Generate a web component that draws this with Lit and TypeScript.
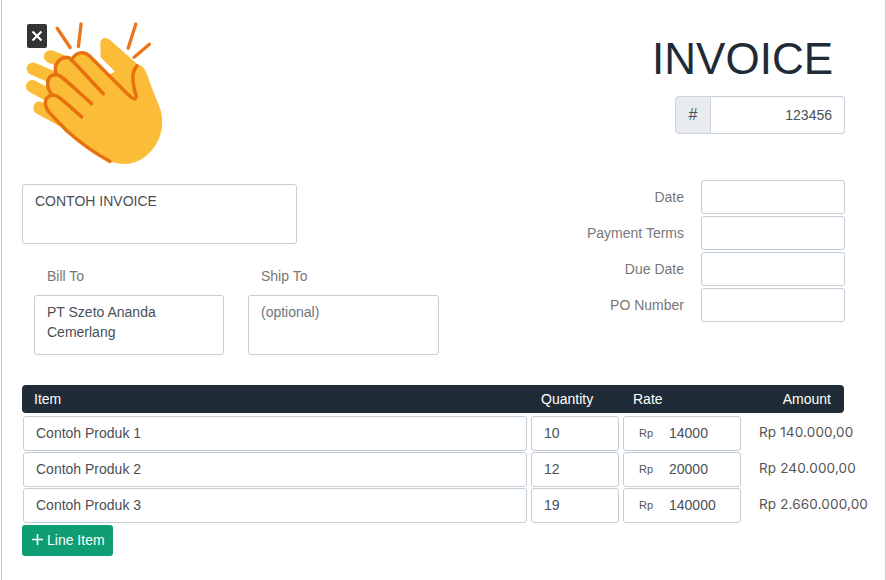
import { LitElement, html, css } from "lit";
import { customElement } from "lit/decorators.js";

const rows = [
  { item: "Contoh Produk 1", qty: "10", rate: "14000", amount: "Rp 140.000,00" },
  { item: "Contoh Produk 2", qty: "12", rate: "20000", amount: "Rp 240.000,00" },
  { item: "Contoh Produk 3", qty: "19", rate: "140000", amount: "Rp 2.660.000,00" },
];
const meta = ["Date", "Payment Terms", "Due Date", "PO Number"];

@customElement("app-root")
export class AppRoot extends LitElement {
  static styles = css`
    :host {
      display: block;
      width: 886px;
      height: 580px;
      overflow: hidden;
      background: #fff;
      font-family: "Liberation Sans", Arial, sans-serif;
      font-size: 14px;
      color: #495057;
    }
    * { box-sizing: border-box; }
    .page {
      position: relative;
      margin-left: 1px;
      width: 885px;
      height: 580px;
      padding: 20px 40px 0 20px;
      border-left: 1px solid #c9c9c9;
      border-right: 1px solid #c9c9c9;
    }
    .top { display: flex; justify-content: space-between; height: 160px; }
    .logo-wrap { position: relative; width: 145px; height: 146px; }
    .logo { display: block; width: 145px; height: 146px; }
    .close {
      position: absolute;
      left: 5px;
      top: 4px;
      width: 20px;
      height: 24px;
      border-radius: 2px;
      background: #333;
      display: flex;
      align-items: center;
      justify-content: center;
    }
    .head { display: flex; flex-direction: column; align-items: flex-end; }
    .title {
      margin: 0 12px 0 0;
      padding-top: 2px;
      font-size: 44px;
      line-height: 74px;
      font-weight: 400;
      color: #212b36;
    }
    .number { display: flex; width: 170px; height: 38px; }
    .addon {
      width: 36px;
      display: flex;
      align-items: center;
      justify-content: center;
      background: #e9ecef;
      border: 1px solid #ced4da;
      border-radius: 4px 0 0 4px;
      font-size: 16px;
      color: #495057;
    }
    .field {
      display: block;
      margin: 0;
      background: #fff;
      border: 1px solid #c3ced8;
      border-radius: 3px;
      font: inherit;
      color: #495057;
      outline: none;
      resize: none;
      line-height: 20px;
    }
    .field::placeholder { color: #6c757d; opacity: 1; }
    .number .field {
      flex: 1;
      min-width: 0;
      border-left: 0;
      border-radius: 0 4px 4px 0;
      padding: 0 12px;
      text-align: right;
    }
    .mid { display: flex; justify-content: space-between; height: 175px; margin-bottom: 30px; }
    .left { padding-top: 4px; }
    .company { width: 275px; height: 60px; padding: 6px 12px; }
    .parties { display: grid; grid-template-columns: 190px 191px; gap: 24px; margin: 22px 0 0 12px; }
    .party-label { height: 29px; padding-left: 13px; line-height: 20px; color: #777; }
    .party .field { width: 100%; height: 60px; padding: 6px 12px; }
    .meta { display: flex; flex-direction: column; gap: 2px; }
    .meta-row { display: flex; align-items: center; justify-content: flex-end; gap: 17px; color: #777; }
    .meta-row .field { width: 144px; height: 34px; }
    .grid {
      display: grid;
      grid-template-columns: 504px 88px 118px auto;
      column-gap: 4px;
      padding-left: 1px;
    }
    .thead {
      display: grid;
      grid-template-columns: 500px 99px 1fr auto;
      align-items: center;
      width: 822px;
      height: 28px;
      padding: 0 13px 0 12px;
      margin-bottom: 3px;
      border-radius: 4px;
      background: #1f2b36;
      color: #fff;
    }
    .thead span:nth-child(2) { padding-left: 7px; }
    .rows { display: flex; flex-direction: column; gap: 1px; }
    .item, .qty { width: 100%; height: 35px; padding: 0 12px 2px; }
    .rate {
      display: flex;
      align-items: center;
      height: 35px;
      border: 1px solid #c3ced8;
      border-radius: 3px;
      padding: 0 0 2px 15px;
    }
    .cur { width: 30px; font-size: 11px; color: #555; }
    .rate input { flex: 1; min-width: 0; border: 0; outline: 0; padding: 0; font: inherit; color: #495057; background: transparent; }
    .amount {
      padding: 6px 0 0 14px;
      font-family: Inter, sans-serif;
      font-size: 13.5px;
      letter-spacing: 0.15px;
      line-height: 20px;
      color: #555;
      white-space: nowrap;
    }
    .add {
      display: flex;
      align-items: center;
      gap: 4px;
      width: 91px;
      height: 31px;
      margin-top: 2px;
      padding: 0 0 2px 10px;
      border: 0;
      border-radius: 3px;
      background: #0f9d74;
      color: #fff;
      font: inherit;
    }
  `;

  private logo() {
    return html`<svg class="logo" viewBox="66 60 435 440" aria-hidden="true">
      <g stroke="#fbbc38" stroke-width="38" stroke-linecap="round" fill="none">
        <path d="M150 170L215 195" />
        <path d="M98 207L170 238" />
        <path d="M96 260L165 297" />
        <path d="M118 325L190 365" />
      </g>
      <path fill="#fbbc38" d="M301 128C303 112 320 110 332 122L418 198L400 300L320 228L345 216L302 172Z" />
      <path fill="#fbbc38" d="M412 196C434 190 442 225 454 258L482 330C500 390 472 455 420 482C380 504 330 494 290 464L200 394L148 340C128 315 132 292 156 284C136 262 136 222 168 222C158 192 180 166 216 178C228 156 252 152 270 170L382 280C400 300 412 304 408 280C395 240 395 215 412 196Z" />
      <g fill="none" stroke="#e8710f" stroke-width="10.5" stroke-linecap="round" stroke-linejoin="round">
        <path d="M330 486C290 465 240 430 200 394L148 340C128 315 132 292 156 286C170 284 180 295 245 352" />
        <path d="M156 286C136 262 136 226 168 224C180 224 200 245 275 312" />
        <path d="M168 224C158 192 180 170 204 173C215 176 240 210 310 282" />
        <path d="M216 178C228 156 252 152 270 170L382 282C397 298 412 305 408 285C396 245 395 215 412 198" />
      </g>
      <g stroke="#e8761e" stroke-width="10" stroke-linecap="round">
        <path d="M171 85L210 143" />
        <path d="M243 72L235 140" />
        <path d="M408 72L385 145" />
        <path d="M449 133L403 172" />
      </g>
    </svg>`;
  }

  render() {
    return html`<div class="page">
      <section class="top">
        <div class="logo-wrap">
          ${this.logo()}
          <div class="close">
            <svg width="12" height="12" viewBox="0 0 12 12"><path d="M1.5 1.5L10.5 10.5M10.5 1.5L1.5 10.5" stroke="#fff" stroke-width="2.2" /></svg>
          </div>
        </div>
        <div class="head">
          <h1 class="title">INVOICE</h1>
          <div class="number">
            <div class="addon">#</div>
            <input class="field" value="123456" />
          </div>
        </div>
      </section>
      <section class="mid">
        <div class="left">
          <textarea class="field company">CONTOH INVOICE</textarea>
          <div class="parties">
            <div class="party">
              <div class="party-label">Bill To</div>
              <textarea class="field">PT Szeto Ananda Cemerlang</textarea>
            </div>
            <div class="party">
              <div class="party-label">Ship To</div>
              <textarea class="field" placeholder="(optional)"></textarea>
            </div>
          </div>
        </div>
        <div class="meta">
          ${meta.map((m) => html`<label class="meta-row">${m}<input class="field" /></label>`)}
        </div>
      </section>
      <div class="thead"><span>Item</span><span>Quantity</span><span>Rate</span><span>Amount</span></div>
      <div class="rows">
        ${rows.map(
          (r) => html`<div class="grid">
            <input class="field item" .value=${r.item} />
            <input class="field qty" .value=${r.qty} />
            <div class="rate"><span class="cur">Rp</span><input .value=${r.rate} /></div>
            <div class="amount">${r.amount}</div>
          </div>`
        )}
      </div>
      <button class="add">
        <svg width="11" height="11" viewBox="0 0 11 11"><path d="M5.5 0V11M0 5.5H11" stroke="#fff" stroke-width="1.6" /></svg>
        Line Item
      </button>
    </div>`;
  }
}
